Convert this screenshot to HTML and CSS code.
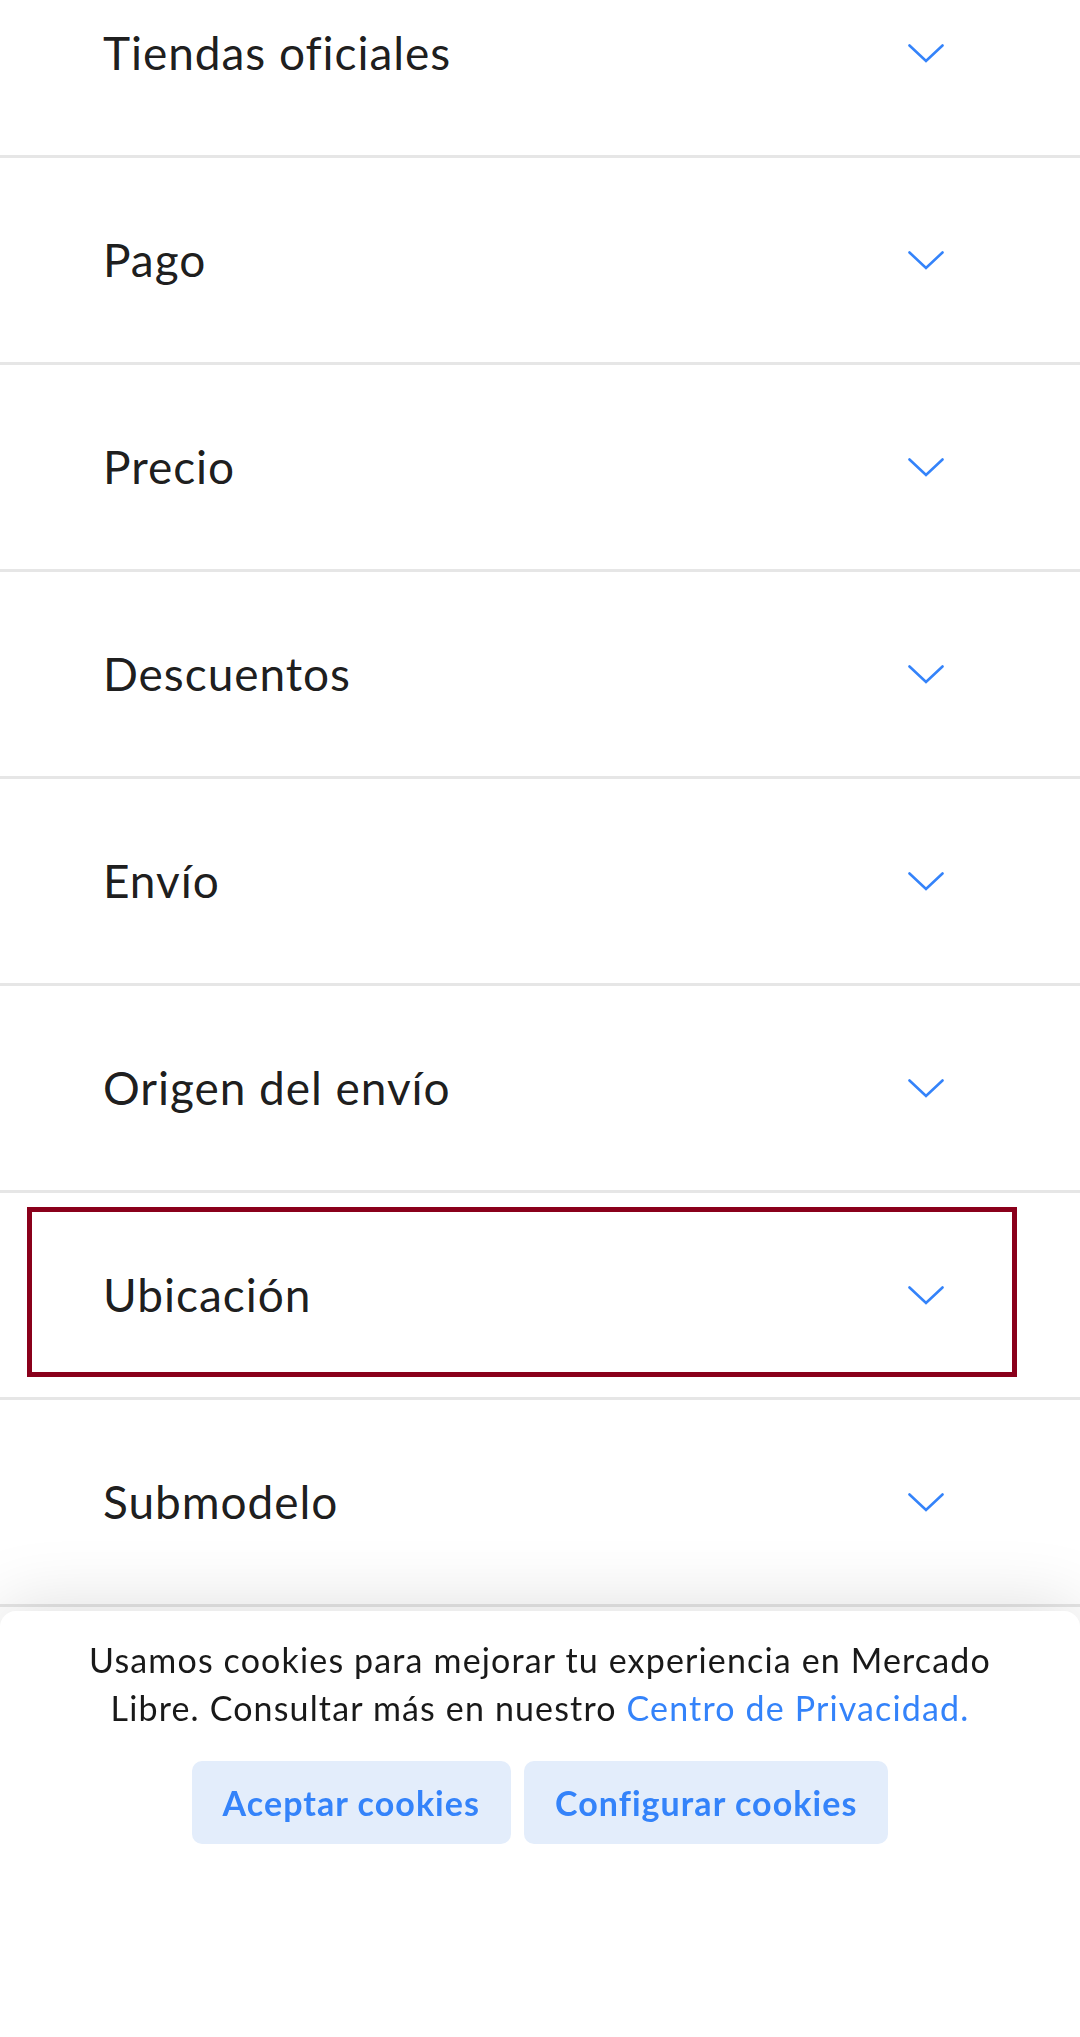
FILE: index.html
```html
<!DOCTYPE html>
<html lang="es">
<head>
<meta charset="utf-8">
<title>Filtros</title>
<link rel="stylesheet" href="styles.css">
</head>
<body>
<div class="filters">
  <div class="row"><div class="row-head"><span class="row-title">Tiendas oficiales</span><svg class="chev" width="36" height="19" viewBox="0 0 36 19"><polyline points="1.5,1.5 18,17 34.5,1.5" /></svg></div></div>
  <div class="row"><div class="row-head"><span class="row-title">Pago</span><svg class="chev" width="36" height="19" viewBox="0 0 36 19"><polyline points="1.5,1.5 18,17 34.5,1.5" /></svg></div></div>
  <div class="row"><div class="row-head"><span class="row-title">Precio</span><svg class="chev" width="36" height="19" viewBox="0 0 36 19"><polyline points="1.5,1.5 18,17 34.5,1.5" /></svg></div></div>
  <div class="row"><div class="row-head"><span class="row-title">Descuentos</span><svg class="chev" width="36" height="19" viewBox="0 0 36 19"><polyline points="1.5,1.5 18,17 34.5,1.5" /></svg></div></div>
  <div class="row"><div class="row-head"><span class="row-title">Envío</span><svg class="chev" width="36" height="19" viewBox="0 0 36 19"><polyline points="1.5,1.5 18,17 34.5,1.5" /></svg></div></div>
  <div class="row"><div class="row-head"><span class="row-title">Origen del envío</span><svg class="chev" width="36" height="19" viewBox="0 0 36 19"><polyline points="1.5,1.5 18,17 34.5,1.5" /></svg></div></div>
  <div class="row"><div class="row-head is-focused"><span class="row-title">Ubicación</span><svg class="chev" width="36" height="19" viewBox="0 0 36 19"><polyline points="1.5,1.5 18,17 34.5,1.5" /></svg></div></div>
  <div class="row"><div class="row-head"><span class="row-title">Submodelo</span><svg class="chev" width="36" height="19" viewBox="0 0 36 19"><polyline points="1.5,1.5 18,17 34.5,1.5" /></svg></div></div>
  <div class="row"><div class="row-head"><span class="row-title">Condición</span><svg class="chev" width="36" height="19" viewBox="0 0 36 19"><polyline points="1.5,1.5 18,17 34.5,1.5" /></svg></div></div>
</div>

<div class="cookie-banner">
  <p class="cookie-text">Usamos cookies para mejorar tu experiencia en Mercado Libre. Consultar más en nuestro <a class="cookie-link" href="#">Centro de Privacidad.</a></p>
  <div class="cookie-actions">
    <button class="cookie-btn">Aceptar cookies</button>
    <button class="cookie-btn">Configurar cookies</button>
  </div>
</div>
</body>
</html>
```

FILE: styles.css
```css
html, body {
  margin: 0;
  padding: 0;
  background: #ffffff;
}

body {
  font-family: Lato, "Open Sans", Arial, sans-serif;
  color: rgba(0, 0, 0, 0.9);
  height: 2037px;
  overflow: hidden;
}

.filters {
  margin-top: -49px;
}

.row {
  padding: 19px 68px 25px 32px;
  border-bottom: 3px solid #e6e6e6;
}

.row-head {
  box-sizing: border-box;
  height: 160px;
  padding: 6px 68px 0 71px;
  display: flex;
  align-items: center;
  justify-content: space-between;
}

.row-head.is-focused {
  outline: 5px solid #8a001b;
}

.row-title {
  font-size: 46px;
  line-height: 56px;
  font-weight: 400;
  letter-spacing: 0.95px;
}

.chev {
  display: block;
  fill: none;
  stroke: #3483fa;
  stroke-width: 2.6;
  stroke-linecap: round;
  stroke-linejoin: miter;
}

.cookie-banner {
  position: fixed;
  left: 0;
  right: 0;
  bottom: 0;
  height: 426px;
  box-sizing: border-box;
  background: #ffffff;
  border-radius: 16px 16px 0 0;
  box-shadow: 0 -6px 70px rgba(0, 0, 0, 0.13);
  padding: 25px 0 0;
  text-align: center;
}

.cookie-text {
  margin: 0 auto;
  max-width: 915px;
  font-size: 34px;
  line-height: 48px;
  letter-spacing: 1.15px;
  color: rgba(0, 0, 0, 0.9);
}

.cookie-link {
  color: #3483fa;
  text-decoration: none;
}

.cookie-actions {
  margin-top: 29px;
  display: flex;
  justify-content: center;
  gap: 13px;
}

.cookie-btn {
  font-family: Lato, "Open Sans", Arial, sans-serif;
  font-size: 34px;
  font-weight: 700;
  letter-spacing: 1.05px;
  color: #3483fa;
  background: #e3edfb;
  border: none;
  border-radius: 10px;
  height: 83px;
  padding: 0 31px;
}
```
